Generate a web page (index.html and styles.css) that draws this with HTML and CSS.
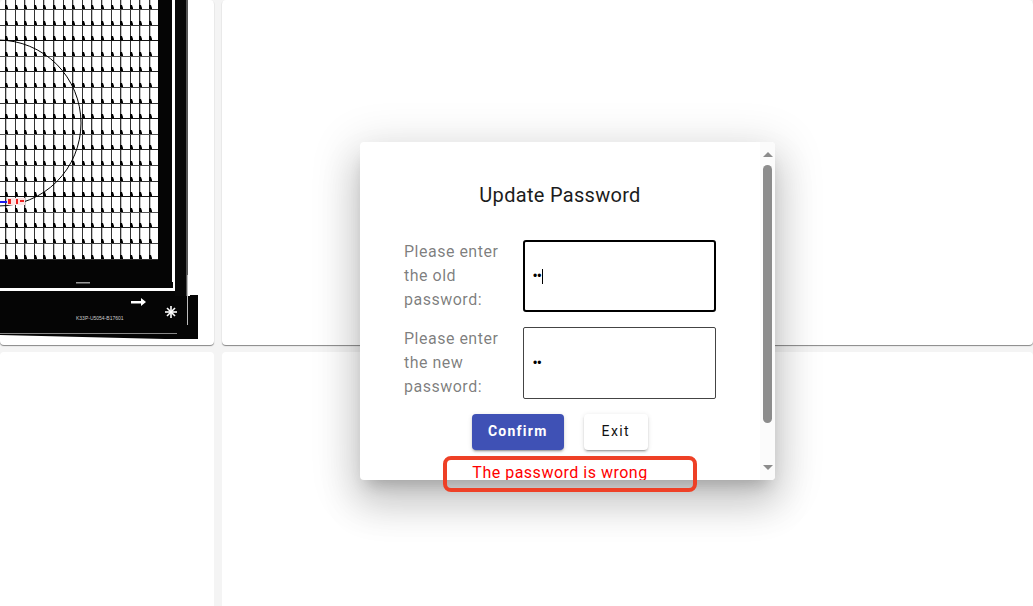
FILE: index.html
```html
<!DOCTYPE html>
<html>
<head>
    <title>Update Password</title>
    <link rel="stylesheet" href="styles.css">
</head>
<body>
    <div class="grid">
        <div class="card">
            <svg class="wafer" width="198" height="339" viewBox="0 0 198 339">
                <defs>
                    <!-- 5 x 5 cells, whole pixels so the lines stay sharp -->
                    <pattern id="cell" x="5" y="9" width="48" height="78" patternUnits="userSpaceOnUse">
                        <g fill="#333">
                            <rect x="0" y="0" width="1" height="78"></rect>
                            <rect x="10" y="0" width="1" height="78"></rect>
                            <rect x="19" y="0" width="1" height="78"></rect>
                            <rect x="29" y="0" width="1" height="78"></rect>
                            <rect x="38" y="0" width="1" height="78"></rect>
                        </g>
                        <g fill="#c4c4c4">
                            <rect x="1" y="0" width="1" height="78"></rect>
                            <rect x="20" y="0" width="1" height="78"></rect>
                            <rect x="39" y="0" width="1" height="78"></rect>
                        </g>
                        <rect x="0" y="0" width="48" height="1" fill="#444"></rect>
                        <rect x="0" y="16" width="48" height="1" fill="#333"></rect>
                        <rect x="0" y="31" width="48" height="1" fill="#111"></rect>
                        <rect x="0" y="47" width="48" height="1" fill="#555"></rect>
                        <rect x="0" y="62" width="48" height="1" fill="#222"></rect>
                        <path fill="#000" d="M0 12h2l1 3v1h-3zM10 12h2l1 3v1h-3zM19 12h2l1 3v1h-3zM29 12h2l1 3v1h-3zM38 12h2l1 3v1h-3z
                            M0 27h2l1 3v1h-3zM10 27h2l1 3v1h-3zM19 27h2l1 3v1h-3zM29 27h2l1 3v1h-3zM38 27h2l1 3v1h-3z
                            M0 43h2l1 3v1h-3zM10 43h2l1 3v1h-3zM19 43h2l1 3v1h-3zM29 43h2l1 3v1h-3zM38 43h2l1 3v1h-3z
                            M0 58h2l1 3v1h-3zM10 58h2l1 3v1h-3zM19 58h2l1 3v1h-3zM29 58h2l1 3v1h-3zM38 58h2l1 3v1h-3z
                            M0 74h2l1 3v1h-3zM10 74h2l1 3v1h-3zM19 74h2l1 3v1h-3zM29 74h2l1 3v1h-3zM38 74h2l1 3v1h-3z"></path>
                    </pattern>
                </defs>
                <rect x="0" y="0" width="198" height="339" fill="#fff"></rect>
                <rect x="0" y="0" width="158" height="260" fill="url(#cell)"></rect>
                <path d="M-2 40 A83 83 0 0 1 -2 206" fill="none" stroke="#000" stroke-width="1"></path>
                <rect x="0" y="201" width="7" height="2" fill="#1a1aee"></rect>
                <rect x="7" y="198" width="18" height="7" fill="#fde4e4"></rect>
                <rect x="8" y="199" width="3" height="5" fill="#e22"></rect>
                <rect x="16" y="199" width="2" height="5" fill="#e22"></rect>
                <rect x="20" y="200" width="4" height="2" fill="#e22"></rect>
                <!-- frame -->
                <rect x="158" y="0" width="14" height="282" fill="#050505"></rect>
                <rect x="175" y="0" width="13" height="296" fill="#080808"></rect>
                <rect x="186" y="0" width="2" height="296" fill="#555"></rect>
                <path d="M0 260 H172 V282 H175 V296 H190 V295 H198 V339 H165 L0 335 Z" fill="#050505"></path>
                <rect x="0" y="288" width="175" height="3" fill="#fff"></rect>
                <rect x="173" y="282" width="2" height="9" fill="#fff"></rect>
                <rect x="76" y="282" width="14" height="1.5" fill="#999"></rect>
                <rect x="0" y="333" width="177" height="1" fill="#888"></rect>
                <rect x="187" y="275" width="1" height="50" fill="#bbb"></rect>
                <path d="M131 301 H141 V298 L146 302 L141 306 V303.5 H131 Z" fill="#fff"></path>
                <g stroke="#fff" stroke-width="1.6">
                    <path d="M171 306 V318"></path>
                    <path d="M165 312 H177"></path>
                    <path d="M167 308 L175 316"></path>
                    <path d="M175 308 L167 316"></path>
                </g>
                <text class="wafer-code" x="76" y="320">K33P-U5054-B17601</text>
            </svg>
        </div>
        <div class="card"></div>
        <div class="card card-low"></div>
        <div class="card card-low"></div>
    </div>

    <div class="dialog">
        <div class="dialog-body">
            <h2 class="dialog-title">Update Password</h2>
            <div class="form-row">
                <label class="form-label">Please enter the old password:</label>
                <div class="field">
                    <input class="pw-input pw-input-focus" type="password" value="ab">
                    <span class="caret"></span>
                </div>
            </div>
            <div class="form-row">
                <label class="form-label">Please enter the new password:</label>
                <div class="field">
                    <input class="pw-input" type="password" value="ab">
                </div>
            </div>
            <div class="actions">
                <button class="btn btn-primary">Confirm</button>
                <button class="btn">Exit</button>
            </div>
            <div class="error-text">The password is wrong</div>
        </div>
        <div class="scrollbar">
            <span class="arrow-up"></span>
            <div class="thumb"></div>
            <span class="arrow-down"></span>
        </div>
    </div>

    <div class="annotation"></div>
</body>
</html>
```

FILE: styles.css
```css
html, body {
    margin: 0;
    height: 100%;
    overflow: hidden;
}
body {
    background: #f4f4f4;
    font-family: Roboto, sans-serif;
}
.grid {
    display: grid;
    grid-template-columns: 214px 1fr;
    grid-template-rows: 345px 1fr;
    gap: 7px 8px;
    height: 100%;
}
.card {
    background: #fff;
    border-radius: 4px;
    box-shadow: 0 1px 1px rgba(0, 0, 0, 0.45);
    overflow: hidden;
}
.card-low {
    border-radius: 4px 4px 0 0;
    box-shadow: none;
}
.wafer {
    display: block;
}
.wafer-code {
    font-family: "Liberation Sans", sans-serif;
    font-size: 5px;
    fill: #ccc;
}

.dialog {
    position: absolute;
    left: 360px;
    top: 142px;
    width: 415px;
    height: 338px;
    display: flex;
    background: #fff;
    border-radius: 4px;
    overflow: hidden;
    box-shadow: 0 11px 15px -7px rgba(0, 0, 0, 0.2), 0 24px 38px 3px rgba(0, 0, 0, 0.14), 0 9px 46px 8px rgba(0, 0, 0, 0.12);
}
.dialog-body {
    flex: 1;
    min-width: 0;
    padding: 0 44px;
    overflow: hidden;
}
.dialog-title {
    margin: 40px 0 32px;
    font-size: 20px;
    line-height: 26px;
    font-weight: 400;
    letter-spacing: 0.3px;
    color: #1c1c1c;
    text-align: center;
}
.form-row {
    display: flex;
    margin-bottom: 15px;
}
.form-label {
    width: 119px;
    padding-right: 20px;
    box-sizing: border-box;
    font-size: 16px;
    line-height: 24px;
    letter-spacing: 0.5px;
    color: rgba(0, 0, 0, 0.52);
}
.field {
    position: relative;
    width: 193px;
    height: 72px;
}
.pw-input {
    display: block;
    width: 100%;
    height: 100%;
    box-sizing: border-box;
    padding: 1px 9px;
    border: 1px solid #444;
    border-radius: 2px;
    background: #fff;
    font-family: "Liberation Sans", sans-serif;
    font-size: 12px;
    color: #000;
    outline: none;
}
.pw-input-focus {
    border: 2px solid #000;
    padding: 1px 8px;
    border-radius: 3px;
}
.caret {
    position: absolute;
    left: 19px;
    top: 29px;
    width: 1px;
    height: 15px;
    background: #000;
}
.actions {
    display: flex;
    justify-content: center;
    gap: 20px;
}
.btn {
    height: 36px;
    padding: 0 18px 2px;
    border: none;
    border-radius: 4px;
    background: #fff;
    font-family: Roboto, sans-serif;
    font-size: 14px;
    font-weight: 400;
    letter-spacing: 1.4px;
    color: #111;
    box-shadow: 0 3px 1px -2px rgba(0, 0, 0, 0.2), 0 2px 2px 0 rgba(0, 0, 0, 0.14), 0 1px 5px 0 rgba(0, 0, 0, 0.12);
}
.btn-primary {
    padding: 0 16px 2px;
    background: #3f51b5;
    color: #fff;
    font-weight: 700;
    letter-spacing: 1.25px;
}
.error-text {
    margin-top: 11px;
    font-size: 16px;
    line-height: 24px;
    letter-spacing: 0.5px;
    color: #f00;
    text-align: center;
}

.scrollbar {
    width: 15px;
    flex: none;
    display: flex;
    flex-direction: column;
    align-items: center;
    background: #fbfbfb;
}
.arrow-up {
    margin-top: 10px;
    width: 0;
    height: 0;
    border-left: 5px solid transparent;
    border-right: 5px solid transparent;
    border-bottom: 5px solid #8c8c8c;
}
.thumb {
    width: 9px;
    height: 258px;
    margin-top: 8px;
    border-radius: 5px;
    background: #8c8c8c;
}
.arrow-down {
    margin-top: 42px;
    width: 0;
    height: 0;
    border-left: 5px solid transparent;
    border-right: 5px solid transparent;
    border-top: 5px solid #8c8c8c;
}

.annotation {
    position: absolute;
    left: 443px;
    top: 456px;
    width: 246px;
    height: 28px;
    border: 4px solid #ee4026;
    border-radius: 8px;
}
```
